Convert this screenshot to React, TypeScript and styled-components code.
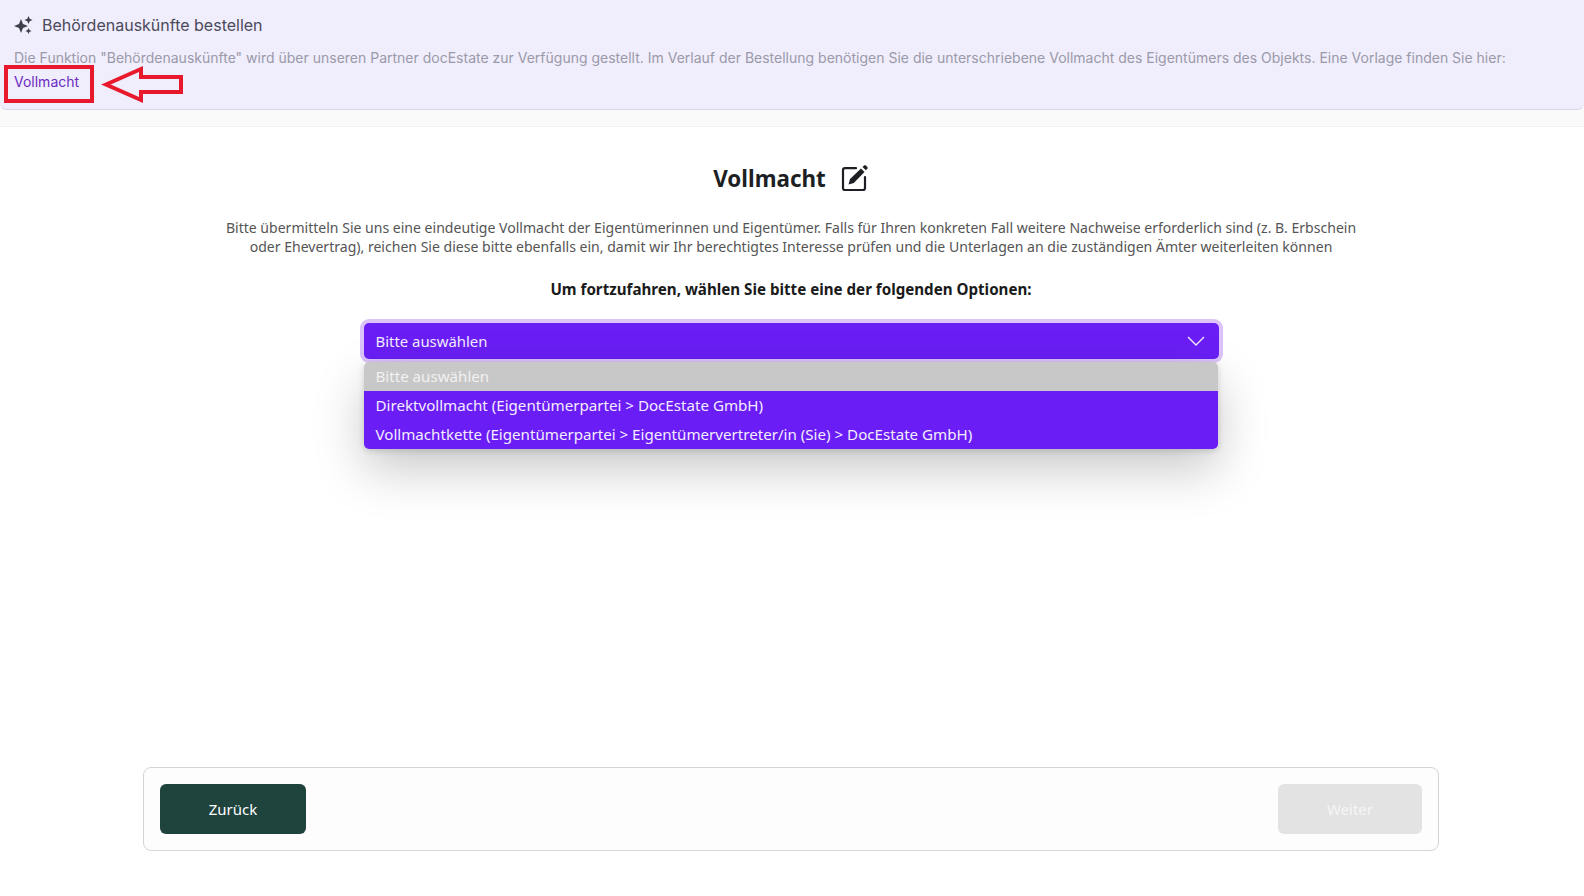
import React from "react";
import styled, { createGlobalStyle } from "styled-components";

const Global = createGlobalStyle`
  html, body { margin: 0; padding: 0; background: #fff; }
  #root { width: 1584px; height: 896px; overflow: hidden; }
`;

const Page = styled.div`
  position: relative;
  height: 896px;
  display: flex;
  flex-direction: column;
  font-family: "Noto Sans", "Open Sans", sans-serif;
  background: #fff;
`;

const Banner = styled.header`
  box-sizing: border-box;
  height: 110px;
  padding: 15px 14px 0;
  background: #f0edfd;
  border-bottom: 1px solid #d9d6e8;
  border-radius: 0 0 6px 6px;
  font-family: Inter, sans-serif;
`;

const BannerTitle = styled.div`
  display: flex;
  align-items: center;
  gap: 9px;
  height: 20px;
  font-size: 16px;
  color: #4a4a5a;
`;

const BannerText = styled.p`
  margin: 11px 0 0;
  font-size: 14px;
  line-height: 24px;
  color: #9a9aa8;
  white-space: nowrap;
`;

const BannerLink = styled.a`
  color: #6b2cc0;
  display: block;
`;

const Band = styled.div`
  height: 16px;
  background: #fafafa;
  border-bottom: 1px solid #f2f2f2;
`;

const Main = styled.main`
  flex: 1;
  display: flex;
  flex-direction: column;
  align-items: center;
  padding-right: 2px;
`;

const Heading = styled.h1`
  display: flex;
  align-items: center;
  gap: 15px;
  margin: 36px 0 0;
  height: 30px;
  font-size: 22.4px;
  font-weight: 700;
  color: #1d1f24;
`;

const Intro = styled.p`
  margin: 25px 0 0;
  width: 1160px;
  text-align: center;
  font-size: 14.06px;
  line-height: 19px;
  font-weight: 400;
  color: #555;
`;

const Prompt = styled.p`
  margin: 23px 0 0;
  font-size: 15.15px;
  line-height: 20px;
  font-weight: 700;
  color: #1a1a1a;
`;

const SelectWrap = styled.div`
  position: relative;
  margin-top: 24px;
  width: 855px;
`;

const SelectBox = styled.div`
  box-sizing: border-box;
  height: 36px;
  padding: 0 14px 0 12px;
  display: flex;
  align-items: center;
  justify-content: space-between;
  background: #6a1ef5;
  color: #f4ecff;
  font-size: 14.9px;
  border-radius: 5px;
  box-shadow: 0 0 0 4px #dcc4fb;
`;

const Menu = styled.ul`
  position: absolute;
  top: 39px;
  left: 0;
  right: 1px;
  margin: 0;
  padding: 0;
  list-style: none;
  border-radius: 5px;
  overflow: hidden;
  box-shadow: 0 20px 50px rgba(0, 0, 0, 0.22), 0 2px 6px rgba(0, 0, 0, 0.15);
`;

const Option = styled.li<{ $muted?: boolean }>`
  height: 29px;
  line-height: 29px;
  padding: 0 12px;
  font-size: 15.13px;
  white-space: nowrap;
  color: ${(p) => (p.$muted ? "#f1f1f1" : "#f4ecff")};
  background: ${(p) => (p.$muted ? "#c8c8c8" : "#6a1ef5")};
`;

const FooterBar = styled.footer`
  box-sizing: border-box;
  margin: auto 0 45px;
  width: 1296px;
  height: 84px;
  padding: 16px;
  display: flex;
  justify-content: space-between;
  background: #fdfdfd;
  border: 1px solid #d4d4d4;
  border-radius: 8px;
`;

const Button = styled.button<{ $disabled?: boolean }>`
  width: ${(p) => (p.$disabled ? "144px" : "146px")};
  height: 50px;
  border: 0;
  border-radius: 6px;
  font-family: inherit;
  font-size: 15px;
  color: ${(p) => (p.$disabled ? "#f5f5f5" : "#fff")};
  background: ${(p) => (p.$disabled ? "#e3e3e3" : "#1f443e")};
`;

const Annotation = styled.svg`
  position: absolute;
  left: 0;
  top: 60px;
  pointer-events: none;
`;

const Sparkles = () => (
  <svg width="19" height="19" viewBox="0 0 19 19" fill="#3f3f4a">
    <path d="M7 3 L9 8 L14 10 L9 12 L7 17 L5 12 L0 10 L5 8 Z" />
    <path d="M14.5 0 L15.7 2.8 L18.5 4 L15.7 5.2 L14.5 8 L13.3 5.2 L10.5 4 L13.3 2.8 Z" />
    <path d="M14.5 12 L15.4 14.1 L17.5 15 L15.4 15.9 L14.5 18 L13.6 15.9 L11.5 15 L13.6 14.1 Z" />
  </svg>
);

const EditIcon = () => (
  <svg width="28" height="28" viewBox="0 0 28 28" fill="none">
    <path d="M15 4.2 H4 Q2 4.2 2 6.2 V24 Q2 26 4 26 H22 Q24 26 24 24 V13" stroke="#1d1f24" strokeWidth="2.2" strokeLinecap="round" />
    <path d="M7.5 20.5 L9 15 L20 4.5 L23.5 8 L12.8 19 Z" fill="#1d1f24" />
    <path d="M21.5 3 L23.2 1.4 Q24 0.8 24.8 1.4 L26.4 3 Q27 3.8 26.4 4.6 L24.9 6.2 Z" fill="#1d1f24" />
  </svg>
);

const Chevron = () => (
  <svg width="18" height="10" viewBox="0 0 18 10" fill="none">
    <path d="M1 1 L9 9 L17 1" stroke="#f3e8ff" strokeWidth="1.4" />
  </svg>
);

export default function App() {
  return (
    <Page>
      <Global />
      <Banner>
        <BannerTitle>
          <Sparkles />
          Behördenauskünfte bestellen
        </BannerTitle>
        <BannerText>
          Die Funktion "Behördenauskünfte" wird über unseren Partner docEstate zur Verfügung gestellt. Im Verlauf der Bestellung benötigen Sie die unterschriebene Vollmacht des Eigentümers des Objekts. Eine Vorlage finden Sie hier:
          <BannerLink>Vollmacht</BannerLink>
        </BannerText>
      </Banner>
      <Band />
      <Main>
        <Heading>
          Vollmacht
          <EditIcon />
        </Heading>
        <Intro>
          Bitte übermitteln Sie uns eine eindeutige Vollmacht der Eigentümerinnen und Eigentümer. Falls für Ihren konkreten Fall weitere Nachweise erforderlich sind (z. B. Erbschein
          <br />
          oder Ehevertrag), reichen Sie diese bitte ebenfalls ein, damit wir Ihr berechtigtes Interesse prüfen und die Unterlagen an die zuständigen Ämter weiterleiten können
        </Intro>
        <Prompt>Um fortzufahren, wählen Sie bitte eine der folgenden Optionen:</Prompt>
        <SelectWrap>
          <SelectBox>
            Bitte auswählen
            <Chevron />
          </SelectBox>
          <Menu>
            <Option $muted>Bitte auswählen</Option>
            <Option>Direktvollmacht (Eigentümerpartei &gt; DocEstate GmbH)</Option>
            <Option>Vollmachtkette (Eigentümerpartei &gt; Eigentümervertreter/in (Sie) &gt; DocEstate GmbH)</Option>
          </Menu>
        </SelectWrap>
        <FooterBar>
          <Button>Zurück</Button>
          <Button $disabled>Weiter</Button>
        </FooterBar>
      </Main>
      <Annotation width="190" height="50" viewBox="0 0 190 50" fill="none">
        <rect x="6" y="7" width="86" height="34" stroke="#e8192c" strokeWidth="4" />
        <path d="M106 24.5 L141 9 V17 H181 V32 H141 V40 Z" stroke="#e8192c" strokeWidth="4" />
      </Annotation>
    </Page>
  );
}
